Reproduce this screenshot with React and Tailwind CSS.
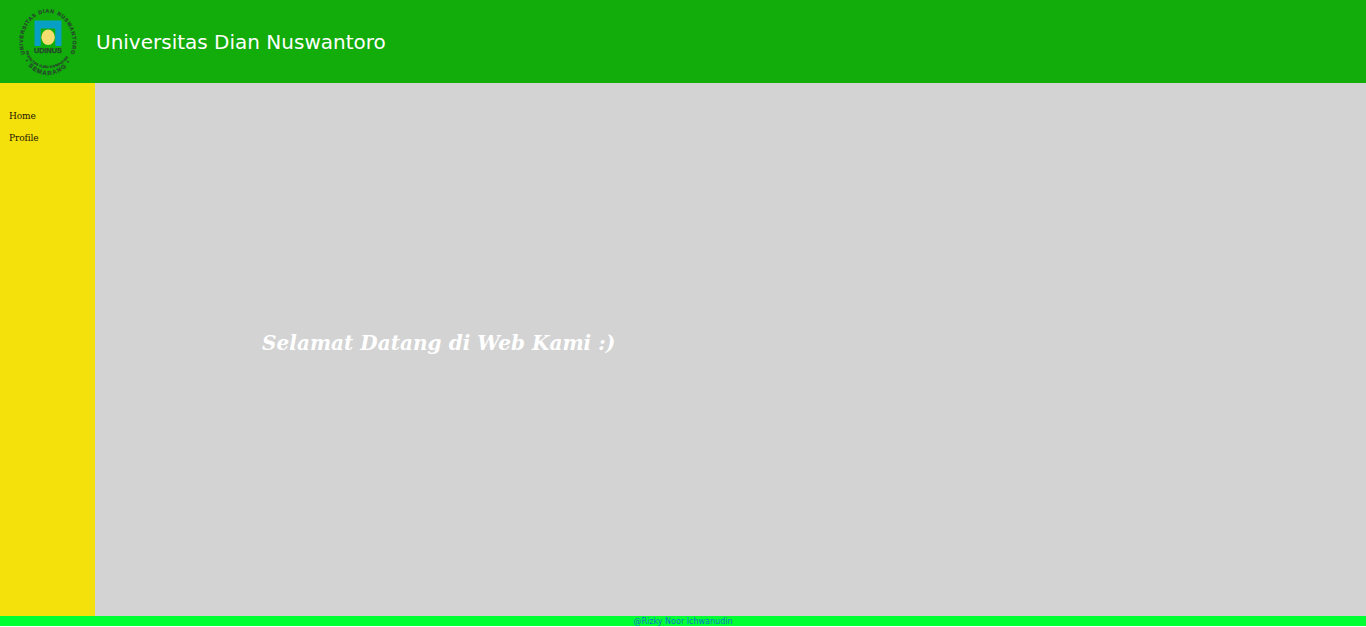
function Logo() {
  return (
    <svg className="h-[70px] w-[60px] shrink-0 overflow-visible" viewBox="0 0 60 70" aria-label="UDINUS">
      <defs>
        <path id="ringTop" d="M7.1 47 A24.8 29.5 0 1 1 52.5 47" />
        <path id="ringBottom" d="M6.3 53 A28 33 0 0 0 53.3 53" />
        <path id="ringInner" d="M8 43 A22 18 0 0 0 52 43" />
      </defs>
      <g fill="#25482b" stroke="#25482b" strokeWidth="0.25" fontFamily="'Liberation Sans', sans-serif" fontWeight="700">
        <text fontSize="5.2">
          <textPath href="#ringTop" textLength="109" lengthAdjust="spacing">UNIVERSITAS DIAN NUSWANTORO</textPath>
        </text>
        <text fontSize="6">
          <textPath href="#ringBottom" startOffset="1" textLength="55" lengthAdjust="spacing">• SEMARANG •</textPath>
        </text>
        <text fontSize="3.3">
          <textPath href="#ringInner" startOffset="1" textLength="54" lengthAdjust="spacing">FAKULTAS ILMU KOMPUTER</textPath>
        </text>
        <text x="16" y="46" fontSize="6.5" textLength="28" lengthAdjust="spacingAndGlyphs">UDINUS</text>
      </g>
      <path fill="#079fc5" d="M16.5 13.5H43.5V39H37.3V21.5H22.7V39H16.5Z" />
      <ellipse cx="30.1" cy="30.3" rx="6.7" ry="7.8" fill="#f5de70" />
    </svg>
  );
}

export default function App() {
  return (
    <div className="flex h-[627px] w-full flex-col overflow-hidden bg-white">
      <header className="flex h-[83px] shrink-0 items-center bg-[#12ac0b] pl-[18px]">
        <Logo />
        <h1 className="ml-[18px] font-['DejaVu_Sans',sans-serif] text-[20px] leading-[24px] whitespace-nowrap text-white">
          Universitas Dian Nuswantoro
        </h1>
      </header>
      <div className="flex min-h-0 flex-1">
        <nav className="flex w-[95px] shrink-0 flex-col bg-[#f4e00a] pt-[22px] pl-[9px] font-['DejaVu_Serif_Condensed','DejaVu_Serif',serif] text-[10px] leading-[22px] tracking-[-0.1px] text-[#1c1503]">
          <a href="#home">Home</a>
          <a href="#profile">Profile</a>
        </nav>
        <main className="flex-1 bg-[#d3d3d3] pt-[246px] pl-[167px]">
          <h2 className="font-['DejaVu_Serif',serif] text-[20px] leading-[28px] font-bold tracking-[0.04px] whitespace-nowrap text-white italic">
            Selamat Datang di Web Kami :)
          </h2>
        </main>
      </div>
      <footer className="mb-px h-[10px] shrink-0 bg-[#00ff33] pt-px text-center font-['DejaVu_Sans',sans-serif] text-[8px] leading-[10px] text-[#0a77c4]">
        @Rizky Noor Ichwanudin
      </footer>
    </div>
  );
}
